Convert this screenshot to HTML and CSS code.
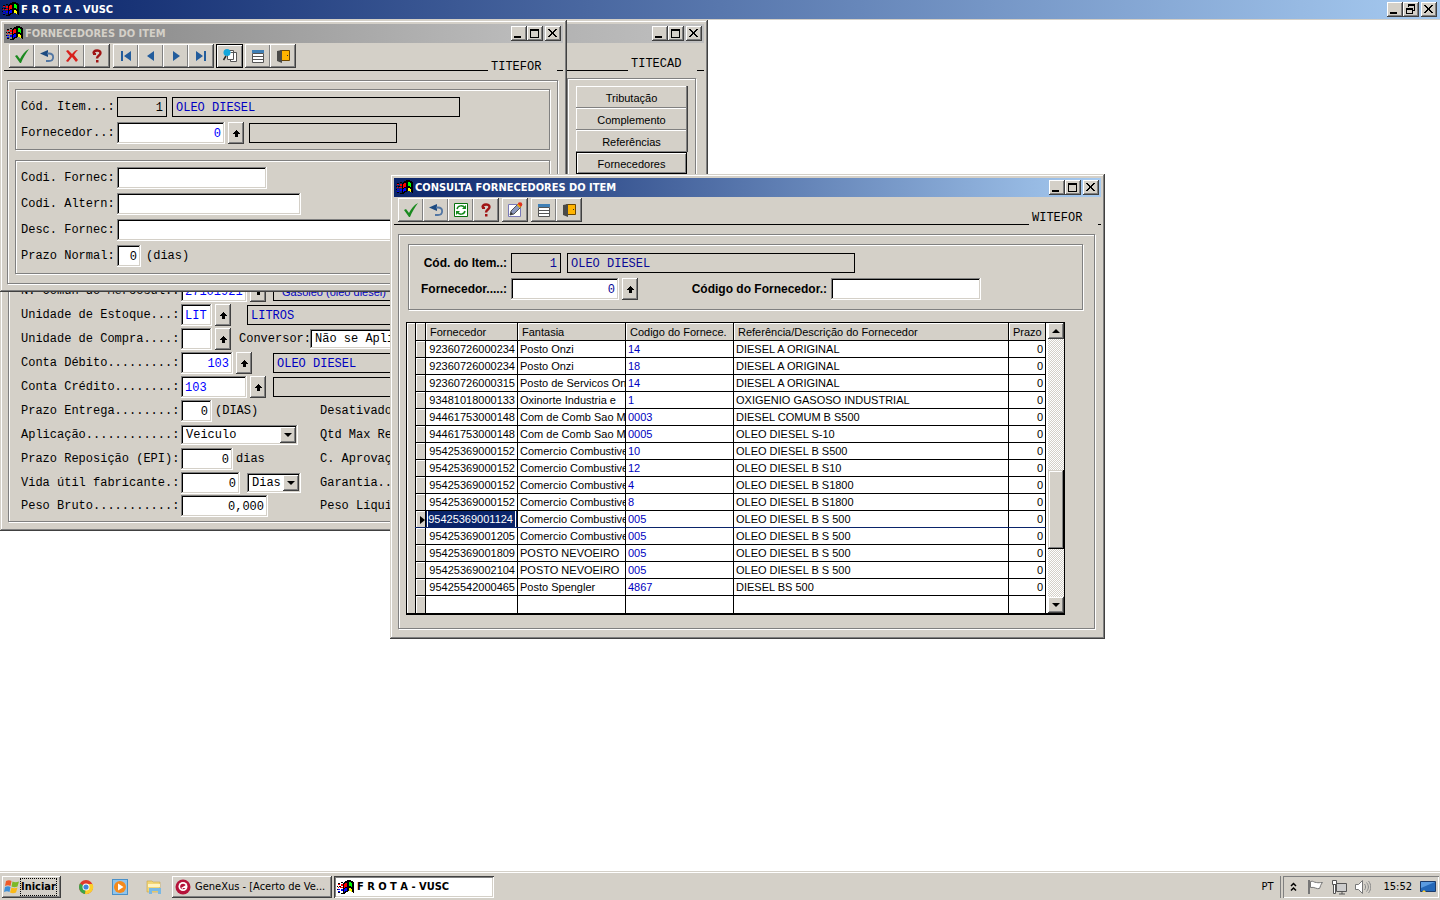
FILE: index.html
```html
<!DOCTYPE html>
<html lang="pt-BR">
<head>
<meta charset="utf-8">
<title>F R O T A - VUSC</title>
<link rel="stylesheet" href="styles.css">
</head>
<body>
<svg class="sprite" aria-hidden="true">
  <symbol id="flag" viewBox="0 0 17 15">
    <path d="M1 3h2v1H1zM4 2h2v1H4zM0 6h1v1H0zM2 6h2v1H2zM1 12h2v1H1zM4 13h3v1H4zM0 9h1v1H0z" fill="#000"/>
    <path d="M1 4h2v1H1zM4 4h2v2H4zM1 7h1v1H1zM3 7h3v1H3z" fill="#f00"/>
    <path d="M1 9h2v1H1zM4 9h2v2H4zM1 11h2v1H1z" fill="#00f"/>
    <path d="M6 3h1V2h1V1h2V0h4v1h2v1h1v11h-1v-1h-2v-1h-3v1H9v1H8v1H6z" fill="#000"/>
    <path d="M7 4h1V3h2v4H8v1H7z" fill="#f00"/><path d="M12 2h2v1h1v4h-1V6h-2z" fill="#0f0"/>
    <path d="M7 9h1V8h2v3H8v1H7z" fill="#00f"/><path d="M12 8h2v1h1v3h-1v-1h-2z" fill="#ff0"/>
  </symbol>
  <symbol id="check" viewBox="0 0 16 16"><path d="M1 8l2-1 3 4C8 7 11 3 15 1 12 5 9 10 7 15H6z" fill="#1b8a1f"/></symbol>
  <symbol id="undo" viewBox="0 0 16 16"><path d="M1 5.500l8-3.500v7z" fill="#1c4a80"/><path d="M8 5.500h2c5.500 0 5.500 7.500 0 7.500H7" fill="none" stroke="#5276a3" stroke-width="1.800"/></symbol>
  <symbol id="cross" viewBox="0 0 16 16"><path d="M2 3l2-1 4 4c2-2 3-4 6-4-2 2-3 3-4 5l4 5-2 2-4-5-4 5-2-1 4-5z" fill="#d8201c"/></symbol>
  <symbol id="help" viewBox="0 0 16 16"><path d="M4.500 5.500C4.500 1.500 11.500 1.500 11.500 5c0 2.500-3.500 2.500-3.500 5.500" fill="none" stroke="#a01414" stroke-width="2.400"/><path d="M4 5h3v2H4zM7 12h2.500v2.500H7z" fill="#a01414"/></symbol>
  <symbol id="first" viewBox="0 0 16 16"><path d="M3 3h2v10H3zM13 3v10L6 8z" fill="#225c9c"/></symbol>
  <symbol id="prev" viewBox="0 0 16 16"><path d="M11 3v10L4 8z" fill="#225c9c"/></symbol>
  <symbol id="next" viewBox="0 0 16 16"><path d="M5 3v10l7-5z" fill="#225c9c"/></symbol>
  <symbol id="last" viewBox="0 0 16 16"><path d="M3 3v10l7-5zM11 3h2v10h-2z" fill="#225c9c"/></symbol>
  <symbol id="find" viewBox="0 0 16 16"><path d="M5.500 2.500h6v9h-6zM8.500 4.500h6v9h-6v-2" fill="#fff" stroke="#555"/><circle cx="5" cy="4.500" r="3.500" fill="#12a6dc"/><path d="M4 8L1.500 12" stroke="#222" stroke-width="1.500"/></symbol>
  <symbol id="list" viewBox="0 0 16 16"><path d="M2.500 5.500h11v9h-11zM3 8.500h10M3 11.500h10" fill="#fff" stroke="#555"/><path d="M2 2h12v3H2z" fill="#3f7fb5"/></symbol>
  <symbol id="door" viewBox="0 0 16 16"><path d="M5.500 2.500h9v10h-9z" fill="#ffb400" stroke="#6d4700"/><path d="M2 3l5-1v13l-5-2z" fill="#4a4a48"/><path d="M12 7h1v1h-1z" fill="#333"/></symbol>
  <symbol id="refresh" viewBox="0 0 16 16"><path d="M1.500 1.500h13v13h-13z" fill="#fff" stroke="#08700c"/><path d="M4 7c1-4 6-4 8-1M12 9c-1 4-6 4-8 1" fill="none" stroke="#168a1c" stroke-width="1.500"/><path d="M13 3v4H9zM3 13V9h4z" fill="#168a1c"/></symbol>
  <symbol id="edit" viewBox="0 0 16 16"><path d="M1.500 2.500h12v12h-12z" fill="#fff" stroke="#7878b8"/><path d="M3 13l1-4 7-7 3 3-7 7z" fill="#8b98bd" stroke="#333" stroke-width=".8"/><path d="M3 13l1-3 2 2z" fill="#333"/><circle cx="13" cy="2.500" r="2.300" fill="#e0301c"/><path d="M10 3l1-1 3 3-1 1z" fill="#f4b400"/></symbol>
  <symbol id="min" viewBox="0 0 12 11"><path d="M1 8h7v2H1z"/></symbol>
  <symbol id="max" viewBox="0 0 12 11"><path d="M1 1h9v9H1zM2 3v6h7V3z" fill-rule="evenodd"/></symbol>
  <symbol id="restore" viewBox="0 0 12 11"><path d="M3 0h7v7H8V6h1V2H4v1H3zM1 4h7v6H1zM2 6v3h5V6z" fill-rule="evenodd"/></symbol>
  <symbol id="close" viewBox="0 0 12 11"><path d="M1 1h2v1h1v1h1v1h1V3h1V2h1V1h2v1H9v1H8v1H7v2h1v1h1v1h1v1H8V8H7V7H6V6H5v1H4v1H3v1H1V8h1V7h1V6h1V4H3V3H2V2H1z"/></symbol>
  <symbol id="up" viewBox="0 0 9 9"><path d="M4 1h1v1h1v1h1v1h1v1H6v3H3V5H1V4h1V3h1V2h1z"/></symbol>
</svg>

<header class="titlebar titlebar-app">
  <svg class="flag"><use href="#flag"/></svg>
  <h1 class="title">F R O T A - VUSC</h1>
  <div class="controls">
    <button class="ctl" aria-label="Minimizar"><svg><use href="#min"/></svg></button>
    <button class="ctl" aria-label="Restaurar"><svg><use href="#restore"/></svg></button>
    <button class="ctl ctl-close" aria-label="Fechar"><svg><use href="#close"/></svg></button>
  </div>
</header>

<main class="desktop">
  <section class="window win-item">
    <div class="titlebar titlebar-idle">
      <div class="controls">
        <button class="ctl" aria-label="Minimizar"><svg><use href="#min"/></svg></button>
        <button class="ctl" aria-label="Maximizar"><svg><use href="#max"/></svg></button>
        <button class="ctl ctl-close" aria-label="Fechar"><svg><use href="#close"/></svg></button>
      </div>
    </div>
    <div class="toolbar"><span class="program">TITECAD</span></div>
    <div class="item-body">
      <div class="panel item-form">
        <div class="row"><label class="lab" for="ncm">N. Comun do Mercosul.:</label>
          <div class="cells c92"><input class="field w66" id="ncm" value="27101921"><button class="pick" aria-label="Selecionar"><svg><use href="#up"/></svg></button></div>
          <input class="box grow sans" aria-label="Descrição NCM" value="Gasóleo (óleo diesel)" readonly></div>
        <div class="row"><label class="lab" for="ue">Unidade de Estoque...:</label>
          <div class="cells c66"><input class="field w31" id="ue" value="LIT"><button class="pick" aria-label="Selecionar"><svg><use href="#up"/></svg></button></div>
          <input class="box grow" aria-label="Unidade" value="LITROS" readonly></div>
        <div class="row"><label class="lab" for="uc">Unidade de Compra....:</label>
          <div class="cells c58"><input class="field w31" id="uc"><button class="pick" aria-label="Selecionar"><svg><use href="#up"/></svg></button></div>
          <label class="conv" for="conv">Conversor:</label>
          <div class="combo grow"><select id="conv"><option>Não se Apli</option></select><span class="drop"></span></div></div>
        <div class="row"><label class="lab" for="cd">Conta Débito.........:</label>
          <div class="cells c92"><input class="field w52 num" id="cd" value="103"><button class="pick" aria-label="Selecionar"><svg><use href="#up"/></svg></button></div>
          <input class="box grow" aria-label="Descrição da conta" value="OLEO DIESEL" readonly></div>
        <div class="row"><label class="lab" for="cc">Conta Crédito........:</label>
          <div class="cells c92"><input class="field w66" id="cc" value="103"><button class="pick" aria-label="Selecionar"><svg><use href="#up"/></svg></button></div>
          <input class="box grow" aria-label="Descrição do crédito" readonly></div>
        <div class="row"><label class="lab" for="pe">Prazo Entrega........:</label>
          <div class="cells c139"><input class="field w31 num dark" id="pe" value="0"><span>(DIAS)</span></div><span>Desativado</span></div>
        <div class="row"><label class="lab" for="ap">Aplicação............:</label>
          <div class="cells c139"><div class="combo w117"><select id="ap"><option>Veiculo</option></select><span class="drop"></span></div></div><span>Qtd Max Re</span></div>
        <div class="row"><label class="lab" for="pr">Prazo Reposição (EPI):</label>
          <div class="cells c139"><input class="field w52 num dark" id="pr" value="0"><span>dias</span></div><span>C. Aprovaç</span></div>
        <div class="row row-tight"><label class="lab" for="vu">Vida útil fabricante.:</label>
          <div class="cells wide c139"><input class="field w59 num dark" id="vu" value="0"><div class="combo w54"><select aria-label="Período"><option>Dias</option></select><span class="drop"></span></div></div><span>Garantia..</span></div>
        <div class="row row-tight"><label class="lab" for="pb">Peso Bruto...........:</label>
          <div class="cells c139"><input class="field w87 num dark" id="pb" value="0,000"></div><span>Peso Líqui</span></div>
      </div>
      <nav class="panel tabs">
        <button class="tab">Tributação</button>
        <button class="tab">Complemento</button>
        <button class="tab">Referências</button>
        <button class="tab tab-on">Fornecedores</button>
      </nav>
    </div>
  </section>

  <section class="window win-forn">
    <div class="titlebar titlebar-idle">
      <svg class="flag"><use href="#flag"/></svg>
      <h2 class="title">FORNECEDORES DO ITEM</h2>
      <div class="controls">
        <button class="ctl" aria-label="Minimizar"><svg><use href="#min"/></svg></button>
        <button class="ctl" aria-label="Maximizar"><svg><use href="#max"/></svg></button>
        <button class="ctl ctl-close" aria-label="Fechar"><svg><use href="#close"/></svg></button>
      </div>
    </div>
    <div class="toolbar">
      <div class="group">
        <button class="tool" aria-label="Confirmar"><svg><use href="#check"/></svg></button>
        <button class="tool" aria-label="Desfazer"><svg><use href="#undo"/></svg></button>
        <button class="tool" aria-label="Excluir"><svg><use href="#cross"/></svg></button>
        <button class="tool" aria-label="Ajuda"><svg><use href="#help"/></svg></button>
      </div>
      <div class="group">
        <button class="tool" aria-label="Primeiro"><svg><use href="#first"/></svg></button>
        <button class="tool" aria-label="Anterior"><svg><use href="#prev"/></svg></button>
        <button class="tool" aria-label="Próximo"><svg><use href="#next"/></svg></button>
        <button class="tool" aria-label="Último"><svg><use href="#last"/></svg></button>
      </div>
      <div class="group group-focus">
        <button class="tool" aria-label="Consultar"><svg><use href="#find"/></svg></button>
      </div>
      <div class="group">
        <button class="tool" aria-label="Lista"><svg><use href="#list"/></svg></button>
        <button class="tool" aria-label="Sair"><svg><use href="#door"/></svg></button>
      </div>
      <span class="program program-low">TITEFOR</span>
    </div>
    <div class="panel forn-body">
      <div class="panel forn-group forn-key">
        <div class="row"><label class="lab" for="f1">Cód. Item...:</label>
          <input class="box w50 num dark" id="f1" value="1" readonly><input class="box w288 ml5" aria-label="Descrição do item" value="OLEO DIESEL" readonly></div>
        <div class="row"><label class="lab" for="f2">Fornecedor..:</label>
          <div class="cells c132"><input class="field w108 num" id="f2" value="0"><button class="pick" aria-label="Selecionar"><svg><use href="#up"/></svg></button></div>
          <input class="box w148" aria-label="Nome do fornecedor" readonly></div>
      </div>
      <div class="panel forn-group">
        <div class="row"><label class="lab" for="f3">Codi. Fornec:</label><input class="field w150" id="f3"></div>
        <div class="row"><label class="lab" for="f4">Codi. Altern:</label><input class="field w184" id="f4"></div>
        <div class="row"><label class="lab" for="f5">Desc. Fornec:</label><input class="field grow" id="f5"></div>
        <div class="row"><label class="lab" for="f6">Prazo Normal:</label><input class="field w24 num dark" id="f6" value="0"><span class="ml5">(dias)</span></div>
      </div>
    </div>
  </section>

  <section class="window win-cons">
    <div class="titlebar">
      <svg class="flag"><use href="#flag"/></svg>
      <h2 class="title">CONSULTA FORNECEDORES DO ITEM</h2>
      <div class="controls">
        <button class="ctl" aria-label="Minimizar"><svg><use href="#min"/></svg></button>
        <button class="ctl" aria-label="Maximizar"><svg><use href="#max"/></svg></button>
        <button class="ctl ctl-close" aria-label="Fechar"><svg><use href="#close"/></svg></button>
      </div>
    </div>
    <div class="toolbar">
      <div class="group">
        <button class="tool" aria-label="Confirmar"><svg><use href="#check"/></svg></button>
        <button class="tool" aria-label="Desfazer"><svg><use href="#undo"/></svg></button>
        <button class="tool" aria-label="Atualizar"><svg><use href="#refresh"/></svg></button>
        <button class="tool" aria-label="Ajuda"><svg><use href="#help"/></svg></button>
      </div>
      <div class="group"><button class="tool" aria-label="Editar"><svg><use href="#edit"/></svg></button></div>
      <div class="group">
        <button class="tool" aria-label="Lista"><svg><use href="#list"/></svg></button>
        <button class="tool" aria-label="Sair"><svg><use href="#door"/></svg></button>
      </div>
      <span class="program">WITEFOR</span>
    </div>
    <div class="panel cons-body">
      <div class="panel cons-group">
        <div class="row"><label class="lab" for="c1">Cód. do Item..:</label>
          <input class="box w50 num" id="c1" value="1" readonly><input class="box w288 ml6" aria-label="Descrição do item" value="OLEO DIESEL" readonly></div>
        <div class="row"><label class="lab" for="c2">Fornecedor.....:</label>
          <div class="cells"><input class="field w108 num" id="c2" value="0"><button class="pick" aria-label="Selecionar"><svg><use href="#up"/></svg></button></div>
          <label class="lab lab-code" for="c3">Código do Fornecedor.:</label><input class="field w150" id="c3"></div>
      </div>
      <div class="grid">
        <div class="strip"></div>
        <table class="data">
          <colgroup><col class="k0"><col class="k1"><col class="k2"><col class="k2"><col><col class="k4"></colgroup>
          <thead><tr><th></th><th>Fornecedor</th><th>Fantasia</th><th>Codigo do Fornece.</th><th>Referência/Descrição do Fornecedor</th><th>Prazo</th></tr></thead>
          <tbody>
            <tr><th></th><td>92360726000234</td><td>Posto Onzi</td><td>14</td><td>DIESEL A ORIGINAL</td><td>0</td></tr>
            <tr><th></th><td>92360726000234</td><td>Posto Onzi</td><td>18</td><td>DIESEL A ORIGINAL</td><td>0</td></tr>
            <tr><th></th><td>92360726000315</td><td>Posto de Servicos On</td><td>14</td><td>DIESEL A ORIGINAL</td><td>0</td></tr>
            <tr><th></th><td>93481018000133</td><td>Oxinorte Industria e</td><td>1</td><td>OXIGENIO GASOSO INDUSTRIAL</td><td>0</td></tr>
            <tr><th></th><td>94461753000148</td><td>Com de Comb Sao Ma</td><td>0003</td><td>DIESEL COMUM B S500</td><td>0</td></tr>
            <tr><th></th><td>94461753000148</td><td>Com de Comb Sao Ma</td><td>0005</td><td>OLEO DIESEL S-10</td><td>0</td></tr>
            <tr><th></th><td>95425369000152</td><td>Comercio Combustivei</td><td>10</td><td>OLEO DIESEL B S500</td><td>0</td></tr>
            <tr><th></th><td>95425369000152</td><td>Comercio Combustivei</td><td>12</td><td>OLEO DIESEL B S10</td><td>0</td></tr>
            <tr><th></th><td>95425369000152</td><td>Comercio Combustivei</td><td>4</td><td>OLEO DIESEL B S1800</td><td>0</td></tr>
            <tr><th></th><td>95425369000152</td><td>Comercio Combustivei</td><td>8</td><td>OLEO DIESEL B S1800</td><td>0</td></tr>
            <tr class="current"><th><svg class="marker" viewBox="0 0 5 8"><path d="M0 0l5 4-5 4z"/></svg></th><td>95425369001124</td><td>Comercio Combustivei</td><td>005</td><td>OLEO DIESEL B S 500</td><td>0</td></tr>
            <tr><th></th><td>95425369001205</td><td>Comercio Combustivei</td><td>005</td><td>OLEO DIESEL B S 500</td><td>0</td></tr>
            <tr><th></th><td>95425369001809</td><td>POSTO NEVOEIRO</td><td>005</td><td>OLEO DIESEL B S 500</td><td>0</td></tr>
            <tr><th></th><td>95425369002104</td><td>POSTO NEVOEIRO</td><td>005</td><td>OLEO DIESEL B S 500</td><td>0</td></tr>
            <tr><th></th><td>95425542000465</td><td>Posto Spengler</td><td>4867</td><td>DIESEL BS 500</td><td>0</td></tr>
            <tr><th></th><td></td><td></td><td></td><td></td><td></td></tr>
          </tbody>
        </table>
        <div class="scroll">
          <button class="arrow arrow-up" aria-label="Rolar para cima"></button>
          <div class="above"></div><div class="thumb"></div><div class="below"></div>
          <button class="arrow" aria-label="Rolar para baixo"></button>
        </div>
      </div>
    </div>
  </section>
</main>

<footer class="taskbar">
  <button class="task start">
    <svg class="ico" viewBox="0 0 16 16"><path d="M2 2c2-1 4-1 5.500 0L6.500 7C5 6 3 6 1 7z" fill="#ef5a28"/><path d="M8.500 2.500c2 1 4 1 6.500 0l-1.500 5c-2 1-4 1-6 0z" fill="#7db928"/><path d="M1 8c2-1 4-1 5.500 0l-1 5C4 12 2 12 0 13z" fill="#3d8fd8"/><path d="M7.500 8.500c2 1 4 1 6 0l-1.500 5c-2 1-4 1-6 0z" fill="#fbb917"/></svg>
    <span>Iniciar</span>
  </button>
  <div class="quick">
    <svg class="ico" viewBox="0 0 16 16"><circle cx="8" cy="8" r="7" fill="#e13b2b"/><path d="M8 8L2 4.500A7 7 0 0 0 7 15z" fill="#3aa648"/><path d="M8 8l-1 7A7 7 0 0 0 14.500 5H8z" fill="#fbcf2a"/><circle cx="8" cy="8" r="3.500" fill="#fff"/><circle cx="8" cy="8" r="2.600" fill="#4285d8"/></svg>
    <svg class="ico" viewBox="0 0 16 16"><rect x=".5" y=".5" width="15" height="15" fill="#8fc4ec" stroke="#4a90c8"/><circle cx="8" cy="8" r="6" fill="#f58a1c"/><path d="M6 4.500v7L11.500 8z" fill="#fff"/></svg>
    <svg class="ico" viewBox="0 0 16 16"><path d="M1 2h5l1 1h7v10H1z" fill="#f2d675" stroke="#c8a548" stroke-width=".6"/><path d="M2 5h12v3H2z" fill="#fff3c0"/><path d="M3 9h12v6h-3v-3H6v3H3z" fill="#79b8e4"/></svg>
  </div>
  <button class="task app">
    <svg class="ico" viewBox="0 0 16 16"><circle cx="8" cy="8" r="7.500" fill="#b5123a"/><circle cx="8" cy="7.500" r="4.500" fill="#fff"/><circle cx="8" cy="7.500" r="2.800" fill="#b5123a"/><path d="M6 9l5-3v3H8v1z" fill="#fff"/></svg>
    <span>GeneXus - [Acerto de Ve...</span>
  </button>
  <button class="task app app-on"><svg class="flag"><use href="#flag"/></svg><span>F R O T A - VUSC</span></button>
  <span class="lang">PT</span>
  <div class="tray">
    <svg class="chev" viewBox="0 0 7 10"><path d="M1 4l2.500-2.500L6 4M1 8.500L3.500 6 6 8.500" fill="none" stroke="#000" stroke-width="1.500"/></svg>
    <svg class="ico" viewBox="0 0 16 16"><path d="M2 1v14" stroke="#777" stroke-width="2"/><path d="M3.500 2.500c3-1 3 1 6 1 2 .5 3 0 6 0-2 2-2 4-3 6-3 1-5-2-9-1z" fill="#fff" stroke="#777"/></svg>
    <svg class="ico" viewBox="0 0 16 16"><path d="M5.500 4.500h10v8h-10zM8 15h6M11 12v3" fill="#ccc" stroke="#555"/><path d="M1.500 1.500h4v4h-4zM2.500 5.500h2v9h-2z" fill="#fff" stroke="#555"/></svg>
    <svg class="ico" viewBox="0 0 16 16"><path d="M.5 5.500h3l4-4v13l-4-4h-3z" fill="#fff" stroke="#777"/><path d="M9.500 5c1.500 2 1.500 4 0 6M11.500 3.500c2.500 3 2.500 6 0 9M13.500 2c3 4 3 8 0 12" fill="none" stroke="#888"/></svg>
    <time>15:52</time>
    <svg class="ico" viewBox="0 0 16 16"><path d="M.5 2.500h15v10H.5z" fill="#2468b8" stroke="#1a3a6a"/><path d="M1 3h14L1 9z" fill="#5a9be0"/><path d="M2 13l2-2 2 2z" fill="#ffd23a"/></svg>
  </div>
</footer>
</body>
</html>
```
FILE: styles.css
```css
:root {
  --face: #d4d0c8;
  --shade: #808080;
  --dark: #404040;
  --navy: #0a246a;
  --mono: "Liberation Mono", monospace;
  --sans: "Liberation Sans", Arial, sans-serif;
  --ui: "DejaVu Sans Condensed", "DejaVu Sans", sans-serif;
}
* { box-sizing: border-box; }
body {
  margin: 0;
  height: 100vh;
  display: flex;
  flex-direction: column;
  overflow: hidden;
  background: #fff;
  color: #000;
  font: 12px/16px var(--mono);
}
button, input, select { font: inherit; color: inherit; margin: 0; padding: 0; border: 0; border-radius: 0; outline: 0; }
.sprite { display: none; }

/* Title bars */
.titlebar {
  display: flex;
  align-items: center;
  height: 19px;
  padding: 0 2px;
  background: linear-gradient(90deg, var(--navy), #a6caf0);
  color: #fff;
}
.titlebar-app { height: 20px; border-bottom: 1px solid var(--face); padding-right: 3px; }
.titlebar-idle { background: linear-gradient(90deg, #808080, #c0c0c0); color: var(--face); }
.flag { width: 17px; height: 15px; flex: none; }
.title { margin: 0 0 0 2px; font: bold 11px/16px var(--ui); }
.controls { display: flex; margin-left: auto; }
.ctl {
  display: flex;
  width: 16px;
  height: 15px;
  padding: 2px;
  background: var(--face);
  color: #000;
  box-shadow: inset -1px -1px var(--dark), inset 1px 1px #fff, inset -2px -2px var(--shade);
}
.ctl-close { margin-left: 2px; }
.ctl svg { width: 12px; height: 11px; }

/* Windows */
.desktop { position: relative; flex: 1; }
.window {
  position: absolute;
  display: flex;
  flex-direction: column;
  padding: 4px;
  background: var(--face);
  box-shadow: inset -1px -1px var(--dark), inset 1px 1px var(--face), inset -2px -2px var(--shade), inset 2px 2px #fff;
}
.win-item { left: 0; top: 0; width: 708px; height: 511px; }
.win-forn { left: 0; top: 0; width: 567px; }
.win-cons { left: 390px; top: 154px; width: 715px; }
.toolbar {
  position: relative;
  display: flex;
  gap: 3px;
  height: 28px;
  padding: 1px 4px 0;
  border-bottom: 1px solid #000;
}
.win-forn .toolbar { padding-left: 5px; }
.program {
  position: absolute;
  right: 3px;
  bottom: -2px;
  width: 69px;
  padding: 0 3px;
  background: var(--face);
}
.win-item .program { right: 7px; }
.win-forn .program { right: 6px; }
.program-low { bottom: -5px; }
.group {
  display: flex;
  height: 24px;
  padding: 0 1px 1px 0;
  background: var(--dark);
}
.group-focus { margin-left: -1px; margin-right: -1px; padding: 1px; background: #000; }
.tool {
  display: flex;
  align-items: center;
  justify-content: center;
  width: 25px;
  background: var(--face);
  box-shadow: inset 1px 1px #fff, inset -1px -1px var(--shade);
}
.tool svg { width: 16px; height: 16px; }
.panel { border: 1px solid var(--shade); box-shadow: 1px 1px #fff, inset 1px 1px #fff; }

/* Form rows */
.row { display: flex; align-items: center; height: 26px; white-space: nowrap; }
.lab { flex: none; }
.cells { display: flex; flex: none; align-items: center; gap: 3px; }
.wide { gap: 7px; }
.field, .box { min-width: 0; flex: none; color: #00f; }
.field {
  height: 22px;
  padding: 2px 4px 0;
  background: #fff;
  box-shadow: inset -1px -1px #fff, inset 1px 1px var(--shade), inset -2px -2px var(--face), inset 2px 2px #000;
}
.box { height: 20px; padding: 2px 3px 0; border: 1px solid #000; background: transparent; color: #0000c0; }
.sans { font: 11px/16px var(--sans); padding-left: 8px; }
.num { text-align: right; }
.dark { color: #000; }
.box.grow, .field.grow, .combo.grow { flex: 1; }
.pick {
  display: flex;
  align-items: center;
  justify-content: center;
  width: 16px;
  height: 22px;
  background: var(--face);
  box-shadow: inset -1px -1px var(--dark), inset 1px 1px #fff, inset -2px -2px var(--shade);
}
.pick svg { width: 9px; height: 9px; flex: none; }
.combo {
  display: flex;
  height: 20px;
  padding: 2px;
  background: #fff;
  box-shadow: inset -1px -1px #fff, inset 1px 1px var(--shade), inset -2px -2px var(--face), inset 2px 2px #000;
}
.combo select { appearance: none; flex: 1; min-width: 0; padding-left: 3px; background: transparent; }
.drop, .arrow {
  display: flex;
  flex: none;
  align-items: center;
  justify-content: center;
  width: 16px;
  background: var(--face);
  box-shadow: inset -1px -1px var(--dark), inset 1px 1px #fff, inset -2px -2px var(--shade);
}
.drop::before, .arrow::before {
  content: "";
  border: 4px solid transparent;
  border-top-color: #000;
  border-bottom: 0;
}
.arrow-up::before { border-top: 0; border-bottom: 4px solid #000; }
.ml5 { margin-left: 5px; }
.ml6 { margin-left: 6px; }
.w24 { width: 24px; }
.w31 { width: 31px; }
.w50 { width: 50px; }
.w52 { width: 52px; }
.w54 { width: 54px; }
.w59 { width: 59px; }
.w66 { width: 66px; }
.w87 { width: 87px; }
.w108 { width: 108px; }
.w117 { width: 117px; }
.w148 { width: 148px; }
.w150 { width: 150px; }
.w184 { width: 184px; }
.w288 { width: 288px; }
.c58 { width: 58px; }
.c66 { width: 66px; }
.c92 { width: 92px; }
.c132 { width: 132px; }
.c139 { width: 139px; }

/* Item window */
.item-body { display: flex; flex: 1; padding: 7px 8px 5px 4px; }
.item-form { display: flex; flex-direction: column; justify-content: flex-end; flex: 1; padding: 0 4px 4px 12px; }
.item-form .row { height: 24px; }
.item-form .row-tight { height: 23px; }
.item-form .lab { width: 160px; }
.conv { width: 71px; }
.tabs { display: flex; flex-direction: column; width: 129px; margin-left: 4px; padding: 7px 8px; }
.tab {
  height: 22px;
  flex: none;
  padding-top: 2px;
  background: var(--face);
  font: 11px/16px var(--sans);
  box-shadow: inset -1px -1px var(--shade), inset 1px 1px #fff, 1px 0 var(--dark);
}
.tab-on { box-shadow: inset 0 0 0 1px #000, inset 2px 2px #fff, inset -2px -2px var(--shade); }

/* Supplier window */
.forn-body { display: flex; flex-direction: column; gap: 10px; margin: 9px 5px 4px 3px; padding: 8px 7px 9px; }
.forn-group { padding: 4px 5px; }
.forn-key { padding-bottom: 3px; }
.forn-group .lab { width: 96px; }

/* Query window */
.cons-body { display: flex; flex-direction: column; gap: 12px; margin: 9px 6px 6px 4px; padding: 9px 11px 13px 7px; }
.cons-group { margin-left: 2px; padding: 5px 0 7px; }
.cons-group .lab { width: 102px; padding-right: 4px; text-align: right; font: bold 12px/16px var(--sans); }
.cons-group .lab-code { width: 193px; }
.cons-group .field, .cons-group .box { color: #0a0a96; }
.grid { display: flex; width: 659px; border: 1px solid #000; border-bottom-width: 2px; background: #fff; }
.strip { width: 8px; background: var(--face); box-shadow: inset 1px 1px #fff; }
.data {
  flex: 1;
  width: 632px;
  table-layout: fixed;
  border-collapse: collapse;
  font: 11px/15px var(--sans);
}
.data tr { height: 17px; }
.data th, .data td {
  height: 17px;
  padding: 1px 2px 0;
  border: 1px solid #000;
  border-top: 0;
  overflow: hidden;
  white-space: nowrap;
  text-align: left;
  font-weight: normal;
}
.data tr:last-child > * { border-bottom: 0; }
.data thead tr:last-child > * { padding-top: 2px; border-bottom: 1px solid #000; }
.data th { background: var(--face); box-shadow: inset 1px 1px #fff; padding-left: 4px; }
.data td:nth-child(2), .data td:nth-child(6) { text-align: right; }
.data td:nth-child(4) { color: #0000c0; }
.data .current > * { border-top: 1px solid var(--navy); border-bottom-color: var(--navy); }
.data .current td:nth-child(2) { background: var(--navy); color: #fff; box-shadow: inset 1px 0 var(--navy), inset 2px 0 #fff, inset -1px 0 var(--navy), inset -2px 0 #fff; padding-right: 4px; }
.marker { display: block; width: 5px; height: 8px; }
.k0 { width: 10px; }
.k1 { width: 92px; }
.k2 { width: 108px; }
.k4 { width: 37px; }
.scroll {
  display: flex;
  flex-direction: column;
  width: 16px;
  margin-left: 2px;
  background: repeating-conic-gradient(#fff 0 25%, var(--face) 0 50%) 0 0 / 2px 2px;
}
.arrow { height: 16px; }
.above { flex: 131; }
.below { flex: 48; }
.thumb { height: 79px; background: var(--face); box-shadow: inset -1px -1px #000, inset 1px 1px var(--face), inset -2px -2px var(--shade), inset 2px 2px #fff; }

/* Taskbar */
.taskbar {
  display: flex;
  align-items: center;
  height: 29px;
  padding: 5px 1px 2px 2px;
  background: var(--face);
  box-shadow: inset 0 1px var(--face), inset 0 2px #fff;
  font: 11px/16px var(--ui);
}
.ico { width: 16px; height: 16px; flex: none; }
.task {
  display: flex;
  align-items: center;
  gap: 4px;
  height: 22px;
  padding: 0 3px;
  white-space: nowrap;
  background: var(--face);
  box-shadow: inset -1px -1px var(--dark), inset 1px 1px #fff, inset -2px -2px var(--shade);
}
.start { width: 59px; padding: 0 2px; gap: 1px; font-weight: bold; }
.start span { outline: 1px dotted #000; }
.quick { display: flex; gap: 18px; margin: 0 10px 0 17px; }
.app { width: 160px; overflow: hidden; }
.app-on { gap: 3px; margin-left: 2px; background: #fff; font-weight: bold; box-shadow: inset 1px 1px var(--dark), inset -1px -1px #fff, inset 2px 2px var(--shade), inset -2px -2px var(--face); }
.lang { margin-left: auto; padding-right: 6px; }
.tray {
  display: flex;
  align-items: center;
  gap: 8px;
  height: 22px;
  margin-left: 4px;
  padding: 0 3px 0 7px;
  box-shadow: inset 1px 1px var(--shade), inset -1px -1px #fff, -2px 0 var(--face), -3px 0 var(--shade);
}
.tray time { margin-left: 4px; }
.chev { width: 7px; height: 10px; margin-right: 2px; }
```
